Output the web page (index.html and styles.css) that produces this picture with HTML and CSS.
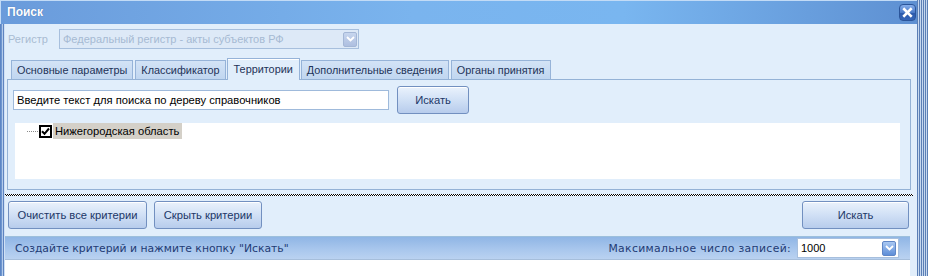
FILE: index.html
```html
<!DOCTYPE html>
<html lang="ru">
<head>
<meta charset="utf-8">
<title>Поиск</title>
<link rel="stylesheet" href="styles.css">
</head>
<body>
<div class="screen">
  <div class="window">
    <div class="titlebar">
      <span class="title">Поиск</span>
      <span class="close">
        <svg width="11" height="11" viewBox="0 0 11 11"><path d="M2.2 2.2 L8.8 8.8 M8.8 2.2 L2.2 8.8" stroke="#fff" stroke-width="2.6" stroke-linecap="square"/></svg>
      </span>
    </div>
    <div class="frame">
      <div class="lborder"></div>
      <div class="main">
        <div class="reg-row">
          <span class="reg-label">Регистр</span>
          <div class="combo combo-disabled">
            <span class="combo-text">Федеральный регистр - акты субъектов РФ</span>
            <span class="dd-btn dd-disabled">
              <svg width="9" height="6" viewBox="0 0 9 6"><path d="M1 1 L4.5 4.5 L8 1" fill="none" stroke="#fff" stroke-width="1.8"/></svg>
            </span>
          </div>
        </div>
        <div class="tabs">
          <span class="tab">Основные параметры</span>
          <span class="tab">Классификатор</span>
          <span class="tab tab-active">Территории</span>
          <span class="tab">Дополнительные сведения</span>
          <span class="tab">Органы принятия</span>
        </div>
        <div class="pane">
          <div class="search-row">
            <div class="input">Введите текст для поиска по дереву справочников</div>
            <button class="btn btn-search">Искать</button>
          </div>
          <div class="tree">
            <div class="node">
              <span class="dots"></span>
              <span class="chk">
                <svg width="9" height="9" viewBox="0 0 9 9"><path d="M1 4.2 L3.5 6.8 L8 1.5" fill="none" stroke="#000" stroke-width="2"/></svg>
              </span>
              <span class="node-label">Нижегородская область</span>
            </div>
          </div>
        </div>
        <div class="splitter"></div>
        <div class="actions">
          <button class="btn btn-clear">Очистить все критерии</button>
          <button class="btn btn-hide">Скрыть критерии</button>
          <span class="spacer"></span>
          <button class="btn btn-find">Искать</button>
        </div>
        <div class="status">
          <span class="status-text">Создайте критерий и нажмите кнопку "Искать"</span>
          <span class="spacer"></span>
          <span class="status-text status-max">Максимальное число записей:</span>
          <div class="combo combo-max">
            <span class="combo-text">1000</span>
            <span class="dd-btn">
              <svg width="9" height="6" viewBox="0 0 9 6"><path d="M1 1 L4.5 4.5 L8 1" fill="none" stroke="#fff" stroke-width="1.8"/></svg>
            </span>
          </div>
        </div>
        <div class="results"></div>
      </div>
    </div>
  </div>
  <div class="rstrip"></div>
</div>
</body>
</html>
```

FILE: styles.css
```css
* { box-sizing: border-box; }
html, body { margin: 0; padding: 0; }
body {
  width: 928px;
  height: 276px;
  overflow: hidden;
  background: #e1eefb;
  font-family: "Liberation Sans", Arial, sans-serif;
  font-size: 11.2px;
}
.screen {
  display: flex;
  height: 276px;
}
.window {
  width: 917px;
  display: flex;
  flex-direction: column;
  background: #e1eefb;
}
.titlebar {
  height: 24px;
  flex: none;
  display: flex;
  align-items: center;
  justify-content: space-between;
  padding: 0 1px 0 7px;
  background: linear-gradient(90deg, #6a9bdb 0%, #7ab4ee 45%, #79b6f0 68%, #5e90d2 100%);
  box-shadow: inset 0 1px #c2dbf6, inset 1px 0 #c2dbf6;
}
.title {
  color: #fff;
  font-weight: bold;
  font-size: 12px;
  text-shadow: 0 0 1px #3c6aa8;
}
.close {
  width: 17px;
  height: 17px;
  border-radius: 4px;
  border: 1px solid #2b559a;
  background: linear-gradient(#86aeea, #4a7ac8 50%, #2b5aab 51%, #3465b8);
  display: flex;
  align-items: center;
  justify-content: center;
}
.frame {
  flex: 1;
  display: flex;
}
.lborder {
  width: 5px;
  flex: none;
  background: linear-gradient(90deg, #5d86c4 0 1px, #6e96d0 1px 2px, #b3cbeb 2px 3px, #5f84c0 3px 4px, #cfe0f4 4px 5px);
}
.main {
  flex: 1;
  display: flex;
  flex-direction: column;
}
.reg-row {
  display: flex;
  align-items: center;
  margin-top: 5px;
  padding-left: 3px;
  height: 20px;
}
.reg-label {
  width: 51px;
  color: #a9bcd2;
  font-size: 11px;
}
.combo {
  display: flex;
  align-items: center;
  height: 20px;
  border: 1px solid #a7bfdd;
  background: #fff;
  padding: 0 1px 0 3px;
}
.combo-disabled {
  width: 300px;
  background: #dde9f7;
  color: #a6bad3;
  font-size: 11px;
}
.combo-text { flex: 1; white-space: nowrap; }
.dd-btn {
  width: 14px;
  height: 15px;
  border-radius: 2px;
  border: 1px solid #5f86c6;
  background: linear-gradient(#a9c8f2, #5e8ed8);
  display: flex;
  align-items: center;
  justify-content: center;
}
.dd-disabled {
  border-color: #a4b7d6;
  background: linear-gradient(#c7d6ee, #aebfe0);
}
.tabs {
  display: flex;
  align-items: flex-end;
  height: 22px;
  margin-top: 8px;
  padding-left: 6px;
  position: relative;
  z-index: 1;
  font-size: 10.85px;
}
.tab {
  height: 19px;
  margin-right: 2px;
  padding: 0 5px;
  display: flex;
  align-items: center;
  border: 1px solid #96b3d8;
  border-bottom: none;
  background: linear-gradient(#d3e3f6, #c0d6f0);
  color: #1e3358;
  white-space: nowrap;
}
.tab-active {
  height: 22px;
  margin: 0 1px 0 -1px;
  padding: 0 6px 2px;
  background: #e1eefb;
  box-shadow: inset 0 1px #fff;
  margin-bottom: -1px;
}
.pane {
  margin: 0 6px 0 2px;
  border: 1px solid #94b2d6;
  padding: 6px 0 10px 0;
}
.search-row {
  display: flex;
  align-items: center;
  height: 28px;
  padding-left: 5px;
}
.input {
  width: 376px;
  height: 20px;
  border: 1px solid #9fbadb;
  background: #fff;
  padding: 0 3px;
  line-height: 18px;
  color: #000;
  white-space: nowrap;
}
.btn {
  height: 28px;
  border: 1px solid #7290c0;
  border-radius: 3px;
  background: linear-gradient(#eaf2fc 0%, #d3e2f6 45%, #b7ccec 100%);
  box-shadow: inset 0 1px #fff;
  color: #1c3767;
  font-family: "Liberation Sans", Arial, sans-serif;
  font-size: 11.2px;
  padding: 0;
}
.btn-search { width: 72px; margin-left: 8px; }
.tree {
  margin: 9px 10px 0 7px;
  height: 56px;
  background: #fff;
}
.node {
  display: flex;
  align-items: center;
  height: 16px;
  padding-left: 12px;
}
.dots {
  width: 11px;
  height: 1px;
  margin-top: 1px;
  background: repeating-linear-gradient(90deg, #8a8a8a 0 1px, transparent 1px 2px);
}
.chk {
  width: 13px;
  height: 13px;
  border: 2px solid #000;
  background: #fff;
  display: flex;
  align-items: center;
  justify-content: center;
  margin-left: 1px;
}
.node-label {
  margin-left: 1px;
  height: 16px;
  padding: 0 3px 0 2px;
  line-height: 16px;
  background: #d4d0c8;
  color: #000;
  white-space: nowrap;
}
.splitter {
  height: 2px;
  margin: 4px 4px 0 0;
  background:
    repeating-linear-gradient(90deg, #000 0 1px, #fff 1px 2px) 0 0 / 100% 1px no-repeat,
    repeating-linear-gradient(90deg, #fff 0 1px, #000 1px 2px) 0 1px / 100% 1px no-repeat;
}
.actions {
  display: flex;
  align-items: center;
  padding: 5px 8px 7px 3px;
}
.btn-clear { width: 139px; }
.btn-hide { width: 108px; margin-left: 7px; }
.btn-find { width: 107px; }
.spacer { flex: 1; }
.status {
  height: 24px;
  margin-right: 7px;
  display: flex;
  align-items: center;
  padding: 0 11px 0 10px;
  border-top: 1px solid #9cbfdc;
  border-bottom: 1px solid #a6bedb;
  background: linear-gradient(#8fb5e5 0%, #a6c5ec 50%, #bad2f1 100%);
  font-family: "DejaVu Sans", Verdana, sans-serif;
  font-size: 10.8px;
  color: #1f3b74;
}
.status-text { white-space: nowrap; }
.status-max { letter-spacing: 0.35px; }
.combo-max {
  width: 102px;
  margin-left: 6px;
  font-family: "Liberation Sans", Arial, sans-serif;
  font-size: 11px;
  color: #000;
  padding-right: 2px;
  letter-spacing: 0;
}
.results {
  flex: 1;
  margin-right: 7px;
  background: #fff;
}
.rstrip {
  width: 11px;
  flex: none;
  background: repeating-linear-gradient(90deg, #5b7fb6 0 1px, #c6d8ef 1px 2px);
}
```
